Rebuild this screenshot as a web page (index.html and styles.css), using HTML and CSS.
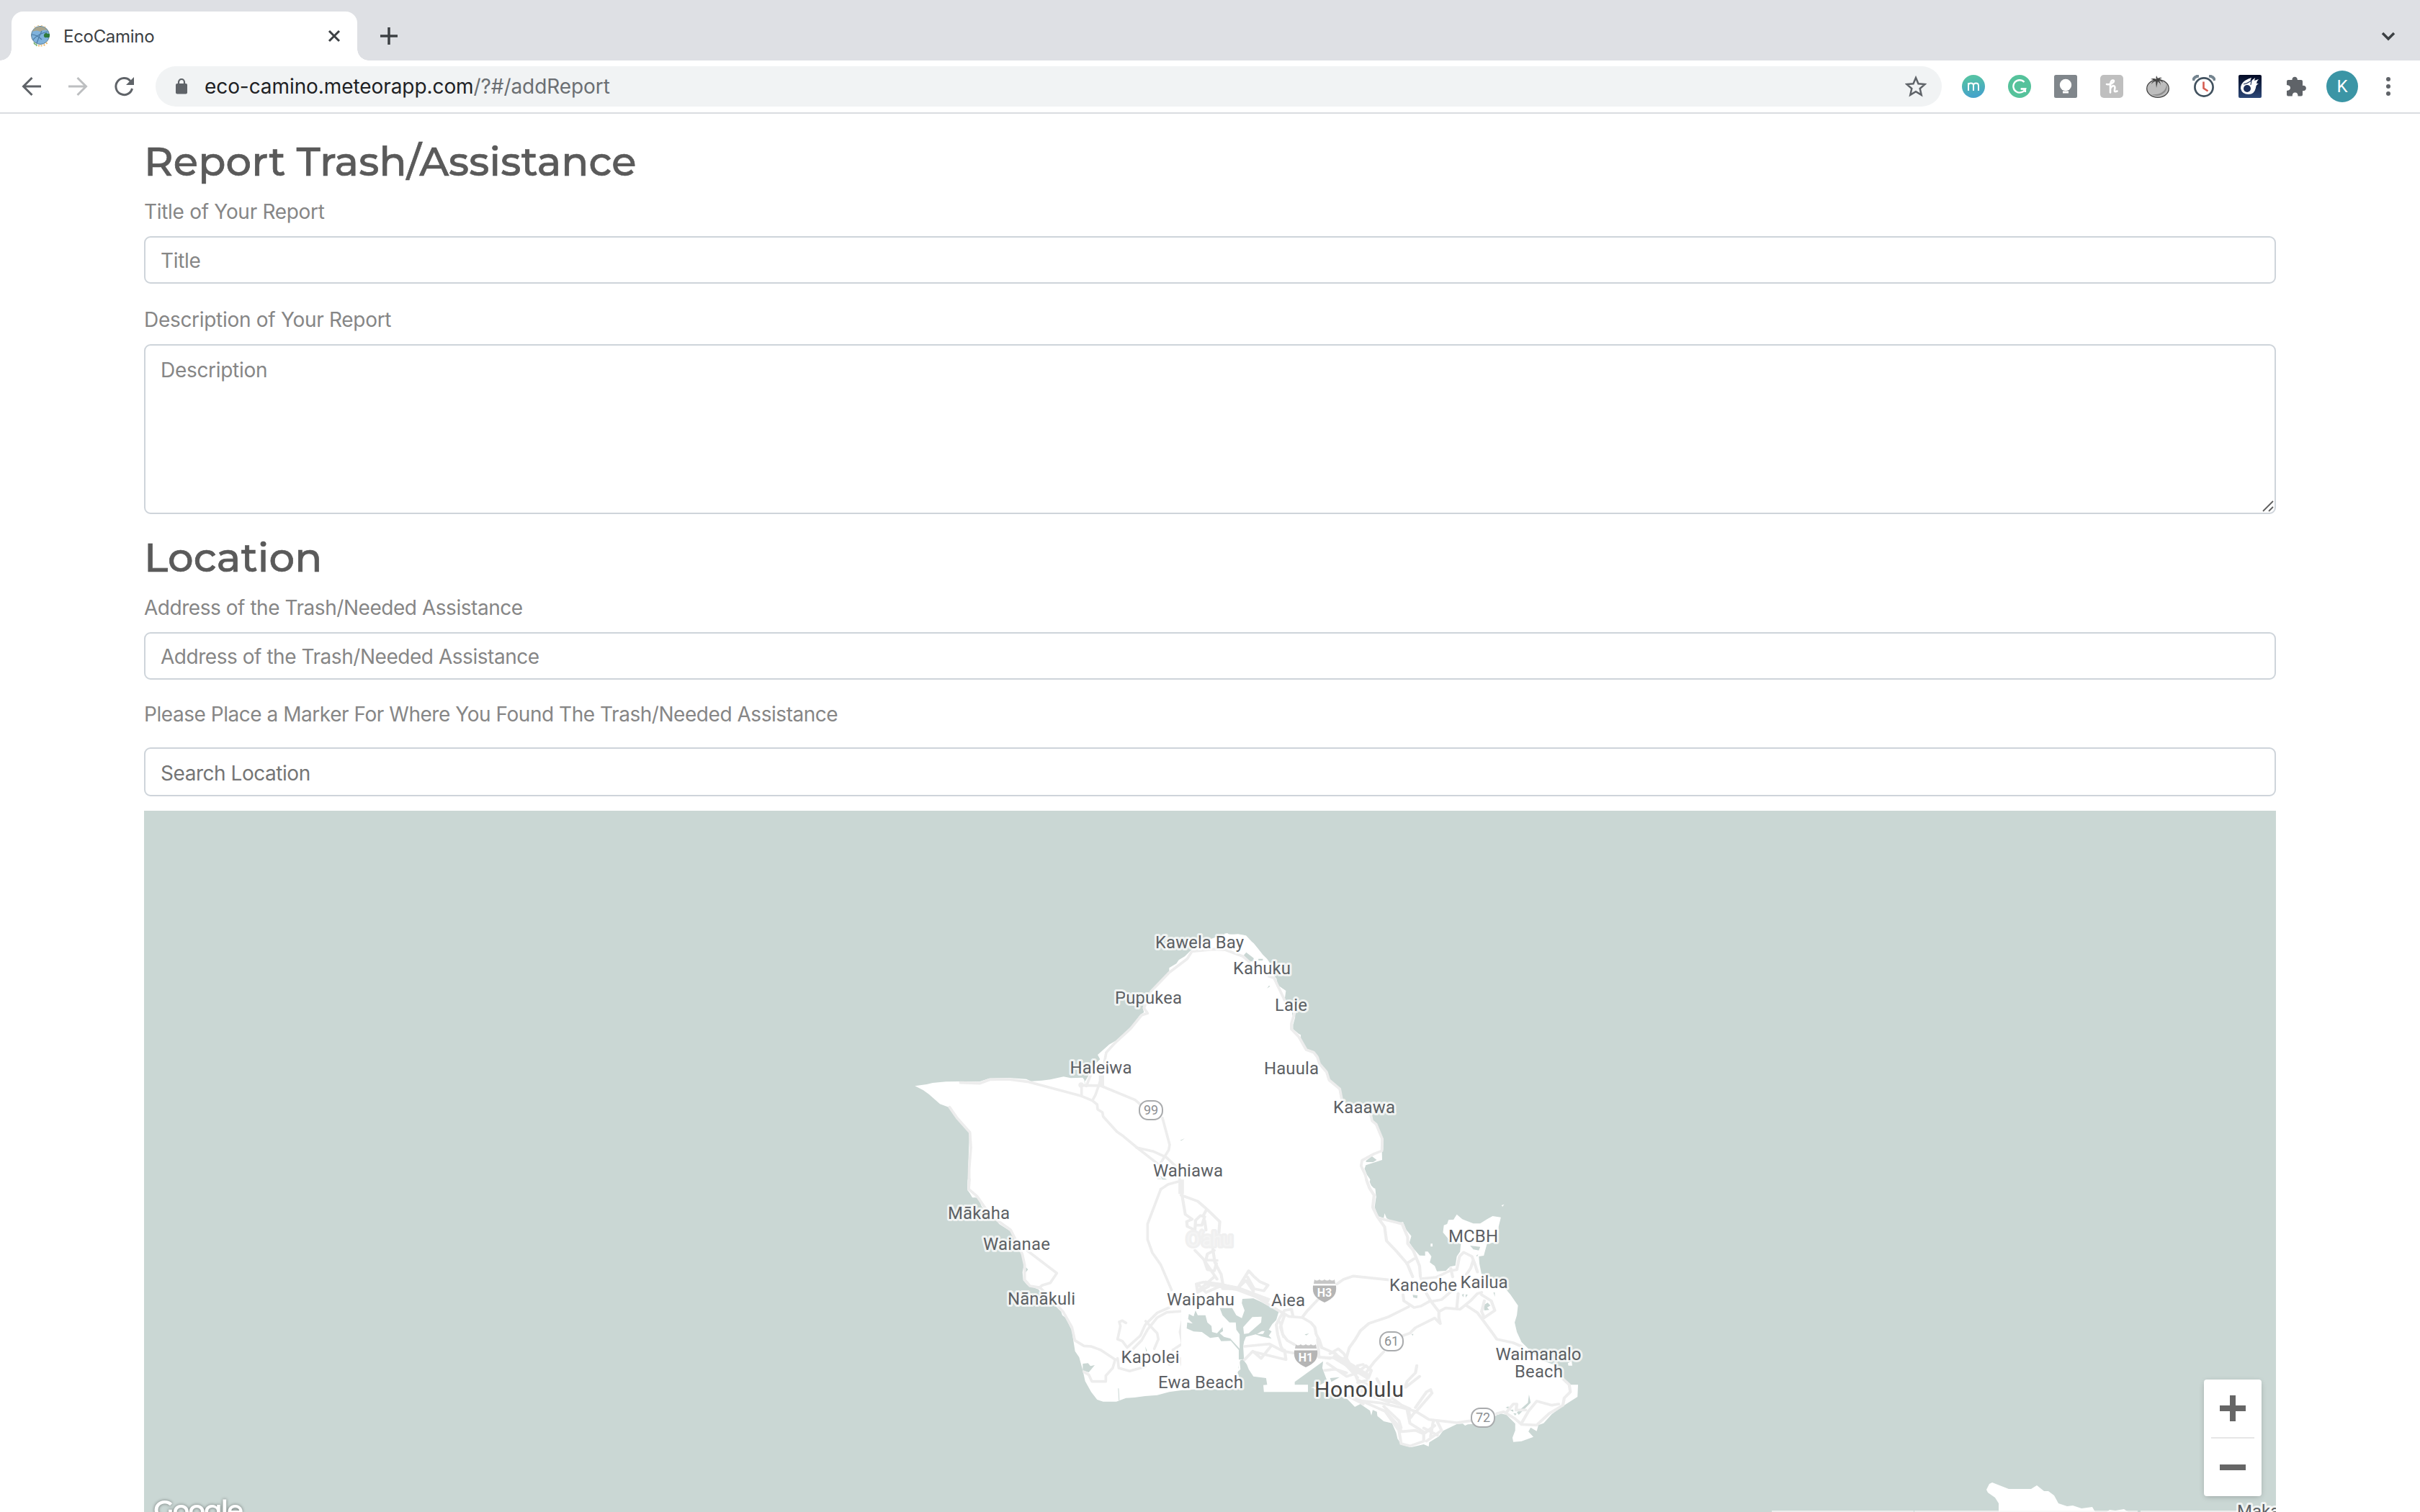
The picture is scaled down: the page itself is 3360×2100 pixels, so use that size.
FILE: index.html
```
<!DOCTYPE html>
<html lang="en">
<head>
<meta charset="utf-8">
<title>EcoCamino</title>
<link rel="stylesheet" href="styles.css">
</head>
<body>
<header class="browser">
  <div class="tabstrip">
    <div class="tab">
      <svg class="favicon" viewBox="0 0 30 30"><circle cx="15" cy="14" r="12.5" fill="#7fb2dc" stroke="#5d7f93" stroke-width="1"/><path d="M4 9Q8 1 16 2Q22 3 25 8Q20 5 15 9Q10 6 4 9Z" fill="#a9a58d"/><path d="M5 20Q12 12 25 9M10 25Q13 16 17 8M3 13Q10 13 17 20" fill="none" stroke="#4a7ba5" stroke-width="1.2"/><path d="M20 13q3-4 5-1q4-1 3 3q0 3-4 2q-5 1-4-4Z" fill="#2f7a3c"/><path d="M6 24l2 3M9 26l1 3" stroke="#7fb777" stroke-width="2"/><path d="M13 27.500l0 2M16.500 27.500l0 2M20 26.500l1 2M23 24l1.500 2" stroke="#e9b96e" stroke-width="2"/><path d="M7 2l1 1M12 0l0 1M17 0l0 1M22 2l-1 1" stroke="#e9b96e" stroke-width="1.500"/></svg>
      <span class="tab-title">EcoCamino</span>
      <svg class="tab-close" viewBox="0 0 20 20"><path d="M3 3l14 14M17 3L3 17" stroke="#3c4043" stroke-width="3"/></svg>
    </div>
    <svg class="new-tab" viewBox="0 0 24 24"><path d="M12 0v24M0 12h24" stroke="#3c4043" stroke-width="3.500"/></svg>
    <svg class="tab-search" viewBox="0 0 24 24"><path d="M4 8l8 8 8-8" fill="none" stroke="#3c4043" stroke-width="3.500"/></svg>
  </div>
  <div class="toolbar">
    <div class="nav">
      <svg viewBox="0 0 36 36"><path d="M31 18H7M18.500 6L6.500 18l12 12" fill="none" stroke="#5f6368" stroke-width="3"/></svg>
      <svg viewBox="0 0 36 36"><path d="M5 18h24M17.500 6l12 12-12 12" fill="none" stroke="#bdbfc1" stroke-width="3"/></svg>
      <svg viewBox="0 0 36 36"><path d="M29.500 21A11.500 11.500 0 1 1 27 10.500" fill="none" stroke="#5f6368" stroke-width="3"/><path d="M32 5v11H21Z" fill="#5f6368"/></svg>
    </div>
    <div class="omnibox">
      <svg class="lock" viewBox="0 0 16 22"><rect y="7" width="16" height="14.500" rx="2" fill="#5f6368"/><path d="M4 8V5a4 4 0 0 1 8 0v3" fill="none" stroke="#5f6368" stroke-width="2.200"/></svg>
      <span class="url">eco-camino.meteorapp.com<span class="path">/?#/addReport</span></span>
      <svg class="star" viewBox="0 0 30 30"><path d="M15 3l3.500 8.300 9 .8-6.800 5.900 2 8.800L15 22.100l-7.700 4.700 2-8.800-6.800-5.900 9-.8Z" fill="none" stroke="#5f6368" stroke-width="2.500"/></svg>
    </div>
    <div class="extensions">
      <svg viewBox="0 0 32 32"><defs><linearGradient id="mg" x1=".4" y1="0" x2=".6" y2="1"><stop offset=".1" stop-color="#55c2a5"/><stop offset=".9" stop-color="#45a3c9"/></linearGradient></defs><circle cx="16" cy="16" r="16" fill="url(#mg)"/><path d="M9 22V11M9 15q0-3.500 3.500-3.500T16 15v7M16 15q0-3.500 3.500-3.500T23 15v7" fill="none" stroke="#fff" stroke-width="1.900"/></svg>
      <svg viewBox="0 0 32 32"><circle cx="16" cy="16" r="16" fill="#55c29b"/><path d="M22.500 10A8.700 8.700 0 1 0 24 19.500H18" fill="none" stroke="#fff" stroke-width="2.400"/><path d="M17.500 19.500H24V24" fill="none" stroke="#fff" stroke-width="2.200"/></svg>
      <svg viewBox="0 0 32 32"><rect width="32" height="32" rx="2.500" fill="#80868b"/><circle cx="16" cy="14" r="8.200" fill="#fff"/><path d="M11 18h10v3H11ZM12 22.500h8v3h-8Z" fill="#fff"/></svg>
      <svg viewBox="0 0 32 32"><rect width="32" height="32" rx="5" fill="#bfbfbf"/><path d="M9 13q6 1 9.500-3 1.500-3-1.500-2.500-3 1-3 8v9M14 19q3-5 5.500-3.500 1.500 1 .5 5-1 4 3.500 2" fill="none" stroke="#fff" stroke-width="2.600" stroke-linecap="round" stroke-linejoin="round"/></svg>
      <svg viewBox="0 0 32 32"><ellipse cx="16" cy="19" rx="15.300" ry="12.300" fill="#bdbdbd" stroke="#444" stroke-width="1.300"/><path d="M28 12q3 10-6 15-7 4-15 0 9 1 15-3 6-4 6-12Z" fill="#8e8e8e"/><path d="M14 1q-1 3 0 5-4-2-8 0 3 0 5 2-3 1-4 5 3-4 6-4l1 9 2-9q3 2 4 6 0-4-2-7 3 0 5 3-1-5-5-5l4-2q-4-1-6 1-1-2-2-4Z" fill="#444"/></svg>
      <svg viewBox="0 0 32 32"><path d="M1 8q1-6 8-6.500" fill="none" stroke="#74848f" stroke-width="4"/><path d="M31 8q-1-6-8-6.500" fill="none" stroke="#74848f" stroke-width="4"/><circle cx="16" cy="17" r="12.600" fill="#fff" stroke="#42525f" stroke-width="2.700"/><path d="M15.500 9.500v9l6 4" fill="none" stroke="#d65c50" stroke-width="2.600"/></svg>
      <svg viewBox="0 0 32 32"><defs><linearGradient id="cg" x1="0" y1="0" x2="0" y2="1"><stop offset="0" stop-color="#040b25"/><stop offset="1" stop-color="#2d4878"/></linearGradient></defs><rect width="32" height="32" rx="2" fill="url(#cg)"/><path d="M3 19Q3 12 9 8q5-3 9-4-2 3-1 5l6-5-1 4 6-2q-3 3-3 6l3 0q-4 2-4 6-2 9-10 9-9 0-11-8Z" fill="#fff"/><circle cx="12" cy="19" r="5" fill="#1b2d58"/><path d="M7 13q5-1 11-5l-1 6" fill="none" stroke="#1b2d58" stroke-width="1.100"/></svg>
      <svg viewBox="0 0 32 32"><path d="M3 7h7.500a3.700 3.700 0 1 1 7.300 0H23q2 0 2 2v6a3.700 3.700 0 1 1 0 7v5.500q0 2-2 2h-4.500q0-5-3.900-5t-3.900 5H5q-2 0-2-2V22q5-.500 5-4t-5-4V9q0-2 2-2Z" fill="#5f6368"/></svg>
    </div>
    <div class="avatar">K</div>
    <svg class="menu" viewBox="0 0 32 32"><g fill="#5f6368"><circle cx="16" cy="6" r="3"/><circle cx="16" cy="16" r="3"/><circle cx="16" cy="26" r="3"/></g></svg>
  </div>
</header>

<main class="page">
  <h1>Report Trash/Assistance</h1>
  <label class="short" for="title">Title of Your Report</label>
  <input class="short" id="title" type="text" placeholder="Title">
  <label class="short second" for="desc">Description of Your Report</label>
  <div class="area">
    <textarea class="short" id="desc" placeholder="Description"></textarea>
    <svg class="grip" viewBox="0 0 16 16"><path d="M1 15L15 1M9 15l6-6" stroke="#606060" stroke-width="1.800"/></svg>
  </div>
  <h1 class="location">Location</h1>
  <label for="addr">Address of the Trash/Needed Assistance</label>
  <input id="addr" type="text" placeholder="Address of the Trash/Needed Assistance">
  <label class="marker" for="search">Please Place a Marker For Where You Found The Trash/Needed Assistance</label>
  <input class="search" id="search" type="text" placeholder="Search Location">

  <div class="map">
    <svg class="canvas" viewBox="200 1126 2960 974">
      <!-- north-west quarter -->
      <g transform="translate(1240 1260) scale(.33333)">
        <path class="land" d="M91 745L140 738 165 732 220 727 275 726 360 727 400 713 480 711 555 716 575 725 620 722 655 718 710 706 740 712 790 710 800 725 812 705 830 665 862 634 852 615 900 572 930 555 990 500 1030 448 1045 438 1040 420 1045 400 1072 348 1150 270 1150 253 1180 235 1190 220 1215 205 1240 180 1262 162 1330 130 1385 112 1440 115 1470 118 1500 150V1210H330L310 1175 312 1100 318 940 265 882 235 835 195 820 150 780 125 762Z"/>
        <path class="water" d="M1195 972l20-9-14 10ZM1112 1120l28 14 5 14-18-4ZM1200 1140l20 10-16-2ZM795 712l8 36-6-20Z"/>
        <g class="road">
          <path d="M280 731L360 734 405 718 480 717 560 727 785 787 830 806 850 822 852 842 872 855 875 872 932 935 960 955 1020 1005 1110 1075"/>
          <path d="M785 787V742L865 744 1008 803 1035 826M1122 878L1152 990 1148 1012 1112 1070M1015 1002L1085 1018 1138 1042 1180 1082 1195 1140"/>
          <path d="M830 806L843 782 868 710 888 605 920 570 990 505 1035 450 1060 442 1045 420 1075 350 1150 272 1225 215 1245 184 1335 175 1390 178 1450 210 1490 225M805 745L822 702"/>
          <path d="M235 833L268 880 320 938 324 1000 317 1090V1170L345 1205M1105 1205L1115 1180 1145 1158 1190 1145 1210 1205M1105 1130L1145 1158"/>
        </g>
        <circle cx="783" cy="741" r="11" fill="#ededed"/>
        <path d="M868 700V745M1200 1140V1200" stroke="#ededed" stroke-width="22" fill="none"/>
      </g>
      <!-- north-east quarter -->
      <g transform="translate(1700 1260) scale(.34439 .33333)">
        <path class="land" d="M0 110L12 108 20 115 55 112 82 117 95 135 118 150 135 172 155 198 172 215 185 235 205 262 200 285 210 298 215 325 248 348 243 385 265 410 285 440 285 460 277 490 277 508 300 528 308 532 308 545 318 565 332 590 360 600 376 618 385 650 412 685 424 720 468 757 476 800 490 820 560 840 590 865 600 890 612 905 622 930 641 965 640 1010 635 1020 636 1053 570 1075 565 1090 575 1115 588 1135 582 1155 600 1170 608 1172 612 1210H0Z"/>
        <path class="water" d="M78 200l10-12 30 24 0 14-20 0ZM137 215h18v7h-18ZM172 338l8-12 4 4ZM571 1056L595 1038 614 1053 600 1062H571ZM272 435l6 0-3 20Z"/>
        <g class="road"><path d="M0 176L75 205 100 228M180 288L200 295 243 388M283 440L270 485V508L300 540 330 594 360 605 375 625 383 652 412 687 422 720 465 757 473 800M590 865L595 890 612 905 636 965 635 1015 603 1028 555 1055 551 1078 568 1115 578 1160 600 1185 604 1210"/></g>
      </g>
      <!-- south-west quarter -->
      <g transform="translate(1240 1640) scale(.33333)">
        <path class="land" d="M311 -5L310 40 332 63 355 72 368 105 400 150 430 165 442 180 492 212 502 235 535 300 545 350 539 380 542 415 560 435 605 452 625 475 670 515 700 545 705 560 718 570 745 625 750 660 758 710 775 735 790 790 800 835 825 880 850 912 875 920 930 920 970 905 1005 903 1050 897 1100 893 1150 880 1205 872 1300 866 1400 870 1430 830 1425 805 1447 785 1440 720V-5Z"/>
        <path class="water" d="M790 762L812 760 822 772 840 768 815 798 790 790ZM553 360l9 10-10 12ZM1050 690l8 18-4 4ZM1425 780l12-14 2 14-10 8ZM937 865h3l3 50h-3Z"/>
        <g class="road">
          <path d="M318 -5L315 35 350 65 385 115 430 162 490 205 510 245 538 305 548 350V412L570 438 612 445 680 515 708 545 745 610 757 665 795 688 825 690 865 705 925 745"/>
          <path d="M560 292L682 385 655 425 620 436 608 446M925 745L915 780 886 812V836H828L815 808 795 796M935 740L940 780 985 793 1050 775"/>
          <path d="M970 592L955 583 942 588 947 605 935 660 955 668 975 695 1030 645 1050 600 1100 550 1150 528M1000 700L1035 665 1060 620 1100 570 1140 548 1210 543 1240 530M1052 585L1100 635 1105 660 1088 700M1115 35L1060 180V245L1080 300 1115 350 1160 455"/>
          <path d="M1205 528V580L1195 630 1225 780M1215 745L1288 670 1310 705 1358 742 1300 805M1165 705L1200 682M1150 765L1180 750M1195 740L1215 805 1255 795 1235 750M1115 35L1145 15 1200 0"/>
        </g>
      </g>
      <!-- south-east quarter -->
      <g transform="translate(1640 1640) scale(.38265 .33333)">
        <path class="land" d="M0 -5H680L690 20 703 35 707 70 702 110 715 148 735 155 738 135 745 155 775 177 805 172 817 205 835 230 828 258 845 285 865 311 885 312V295H895L908 315 902 340 920 355 928 377 960 375 975 358 995 353 1000 315 1012 295 1015 262 975 250 950 215 953 185 965 180 970 163 988 162 1000 140 1020 160 1060 178H1085L1110 160 1130 147 1160 152 1152 190 1148 255 1110 262 1103 290 1098 312 1080 315 1082 345 1090 390 1130 405 1170 440 1195 475 1222 520 1218 560 1210 590 1218 630 1235 672 1300 745 1350 765 1385 820 1408 850H1440L1438 900 1390 935 1345 972 1315 1010 1296 1018 1290 1043 1268 1028 1260 1045 1278 1067 1235 1085 1205 1088 1202 1070 1212 1040V1012L1180 975 1160 970 1140 980 1100 1010 1040 1015 1030 1020 1022 1012 1000 1014 950 1042 935 1065 900 1090 898 1107 880 1098 835 1110 800 1100 785 1075 780 1050 765 1010 735 1002 712 980 710 962 695 955 690 978 685 958 650 930 630 942 603 910 570 895 500 875 480 865 530 835 512 780 515 752 412 838V850H460V880H300L298 851 312 850 308 822 262 815 245 785 238 765 225 745 215 748 208 768 205 800 222 860 200 868H0Z"/>
        <path class="water" d="M222 492L262 490 290 505 330 530 354 545 345 580 330 598 318 620 328 628 318 645 328 658 290 648 270 640 235 650 228 670 225 690 228 745 209 745 209 705 180 667 145 668 135 650 105 655 75 630 45 628 20 615 22 590 42 595 25 575 28 555 45 565 52 540 60 560 88 560 95 590 110 605 112 630 130 635 150 610 152 626 140 635 155 650 178 657 212 700V640L200 620 198 590 175 590 150 560 140 530 185 530 200 560 220 572 230 540 220 510Z"/>
        <path class="land" d="M225 610L258 568 292 566 290 590 245 635 228 638ZM905 262h7v12h-7ZM1162 102l10-4-6 10ZM1403 760l14-8 2 18h-14ZM470 862l14-4 0 6ZM275 638l18-12 10 0-6 12Z"/>
        <path class="water" d="M840 475L858 478 856 490 842 486ZM1097 518L1112 508 1122 520 1110 528 1118 538 1100 540ZM1048 270L1085 275 1080 290 1060 286ZM1018 475l8-4-2 14ZM1032 473l8 2-8 12ZM1258 925L1262 890 1268 925 1225 975 1218 965ZM1177 945l10-5 4 10ZM1193 955l12-2 0 10ZM1205 968l12 2-5 8ZM1143 975l15 2-10 5ZM448 640l16-4-10 8ZM540 822L575 818 545 838ZM835 638l8 0-3 8ZM1070 312l8-6-4 10ZM1133 465l5 0 0 18Z"/>
        <g class="road">
          <path d="M672 -5L683 30 700 60 695 110 712 150 738 192 745 250 780 292 820 345 840 400M725 158L770 170 802 180 822 235 822 262 842 290 865 355 868 400M818 345L845 325"/>
          <path d="M870 408L925 402 975 375 1000 370 1010 315 1025 298 1055 315 1065 345 1075 380M1060 330L1050 365 1035 390M978 365L985 400"/>
          <path d="M755 413L625 397 590 410 565 430M500 490L455 545 440 568M825 525L750 568 680 595 650 625 632 660 610 695 600 735"/>
          <path d="M805 475L808 500 845 528 870 522 905 500 935 545 960 530 1012 535 1050 500 1075 470 1090 465M910 502L945 495 980 460M890 470L905 500M1005 470L1000 530M935 545V570L940 595 920 572 850 612 830 635 805 645"/>
          <path d="M1035 520L1075 550 1130 635 1145 660 1205 675 1235 690M1090 475L1125 500 1138 540 1100 570 1090 545 1100 500M735 712L700 755 670 800"/>
          <path d="M0 60L60 85 95 120 140 170 137 215M0 40L15 140 40 160 20 170 22 190 50 205 52 165 70 145 85 150 75 185 55 185M85 165L90 205M92 120L80 145M50 290L80 325 130 410M115 285L122 340 145 390 152 435M120 290L95 305 90 330 130 332M85 335L95 370 120 375 128 345"/>
          <path d="M60 465L55 430 80 422 140 430 205 448 245 375 265 400 285 420 315 435 300 458 265 450 240 400M60 430L90 465 150 435M60 465L100 440M205 448L235 415 262 460M150 450L195 450 250 468 330 525 390 565 440 570 470 590 485 610 490 640 502 665 510 695"/>
          <path d="M120 400L60 460M345 600L358 570 375 540 400 535 405 560M345 600L350 640 362 690 370 705M360 590L368 640 385 665 410 682M375 560L360 610 372 650M230 690L320 680 370 710 410 718M230 745L260 710 290 740 325 690M260 712L380 745 375 705M495 660L500 735 540 740"/>
          <path d="M510 695L550 715 620 770 640 830 680 850M500 735L600 740 625 800M540 720L570 700 590 720 610 760 680 810M530 760L600 815 640 800 670 770 690 790 680 820M520 790L560 785 600 800M560 720L640 820M640 800L640 770 660 765M680 830L640 840 700 900 790 930"/>
          <path d="M630 905L700 940 740 960 780 1010 800 1045 850 1040 880 1055 880 1085 830 1105 798 1095 790 1040 740 960M640 915L720 925 800 945 850 960 900 995 1000 1008 1050 1000M710 825L735 880 800 935 830 950"/>
          <path d="M735 940L790 1000 798 1030M820 955L830 1010 885 1050M850 960L830 990 825 950M850 965L910 885 905 870 890 880 850 945M855 770L850 800 820 835 812 860M865 815L815 860M915 1000L905 1065M930 1005L945 1040 890 1085M885 1050L920 1020M880 1030L930 1060"/>
          <path d="M1145 970L1170 962 1210 990 1235 1015 1290 1018 1335 970 1385 935 1390 905 1412 880 1408 850 1380 820M1235 1010L1260 960 1290 918 1345 935 1370 930M1180 965L1205 930 1218 930 1215 955 1250 955M560 870L660 930"/>
        </g>
        <path d="M85 425L205 450 320 500 M0 -5V55M620 860L760 920M550 730L680 820" fill="none" stroke="#ededed" stroke-width="20"/>
      </g>
      <!-- neighbouring island -->
      <path class="land" d="M2758 2069L2762 2061 2766 2059 2789 2068H2820L2828 2063 2838 2071 2844 2071 2852 2077 2858 2088 2870 2092 2878 2091 2890 2095 2905 2093 2909 2100H2775V2088L2770 2080 2760 2073ZM2925 2100l4-3 8 1 12-2 6 4Z"/>
      <path d="M2460 2099H2657M2658 2099H2968M2972 2099H3160" stroke="#f5f5f5" stroke-opacity=".75" stroke-width="2"/>

      <g class="island"><text x="1647" y="1731" textLength="65">O‘ahu</text></g>
      <g class="town">
        <text x="1604" y="1316.500" textLength="123">Kawela Bay</text>
        <text x="1548" y="1393.500" textLength="93">Pupukea</text>
        <text x="1485.500" y="1490.500" textLength="86">Haleiwa</text>
        <text x="1601" y="1633.500" textLength="97">Wahiawa</text>
        <text x="1712" y="1352.500" textLength="80">Kahuku</text>
        <text x="1770" y="1403.500" textLength="45">Laie</text>
        <text x="1755" y="1491.500" textLength="76">Hauula</text>
        <text x="1851" y="1545.500" textLength="86">Kaaawa</text>
        <text x="1316" y="1692.500" textLength="86">Mākaha</text>
        <text x="1365" y="1735.500" textLength="93">Waianae</text>
        <text x="1399" y="1811.500" textLength="94">Nānākuli</text>
        <text x="1620" y="1812.500" textLength="94">Waipahu</text>
        <text x="1556.500" y="1892.500" textLength="81">Kapolei</text>
        <text x="1608" y="1927.500" textLength="118">Ewa Beach</text>
        <text x="1765" y="1813.500" textLength="47">Aiea</text>
        <text x="1929" y="1792.500" textLength="94">Kaneohe</text>
        <text x="2027.500" y="1788.500" textLength="66">Kailua</text>
        <text x="2011" y="1724.500" textLength="69">MCBH</text>
        <text x="2076.500" y="1888.500" textLength="119">Waimanalo</text>
        <text x="2103" y="1912.500" textLength="67">Beach</text>
        <text x="3106" y="2107">Maka</text>
        <text class="city" x="1825" y="1939.500" textLength="124">Honolulu</text>
      </g>
      <g class="route">
        <rect x="1582" y="1529" width="32" height="26" rx="12"/><text x="1598" y="1548">99</text>
        <rect x="1916" y="1850" width="32" height="26" rx="12"/><text x="1932" y="1869">61</text>
        <rect x="2043" y="1956" width="32" height="26" rx="12"/><text x="2059" y="1975">72</text>
      </g>
      <g class="interstate">
        <g transform="translate(1823 1777)"><path class="crown" d="M2 0Q5 3 9 0Q12 3 16 0Q20 3 23 0Q27 3 30 0L31 6H1Z"/><path class="body" d="M0 8.500H32Q33 18 29 23 25 28 16 32 7 28 3 23-1 18 0 8.500Z"/><text x="16" y="24">H3</text></g>
        <g transform="translate(1797 1867)"><path class="crown" d="M2 0Q5 3 9 0Q12 3 16 0Q20 3 23 0Q27 3 30 0L31 6H1Z"/><path class="body" d="M0 8.500H32Q33 18 29 23 25 28 16 32 7 28 3 23-1 18 0 8.500Z"/><text x="16" y="24">H1</text></g>
      </g>
      <text class="brand" x="213" y="2110" textLength="125">Google</text>
    </svg>
    <div class="zoom">
      <button aria-label="Zoom in"><svg viewBox="0 0 36 36"><path d="M18 0v36M0 18h36" stroke="#666" stroke-width="8"/></svg></button>
      <button aria-label="Zoom out"><svg viewBox="0 0 36 36"><path d="M0 18h36" stroke="#666" stroke-width="8"/></svg></button>
    </div>
  </div>
</main>
</body>
</html>
```
FILE: styles.css
```
* { box-sizing: border-box; }
html, body { height: 100%; }
body {
  margin: 0;
  overflow: hidden;
  background: #fff;
  font-family: Inter, "Liberation Sans", sans-serif;
  display: flex;
  flex-direction: column;
}
svg { display: block; flex: none; }

/* browser chrome */
.browser { flex: none; }
.tabstrip {
  height: 84px;
  padding: 16px 32px 0 16px;
  background: #dee0e4;
  display: flex;
  align-items: center;
}
.tab {
  position: relative;
  width: 480px;
  height: 68px;
  padding: 0 22px 0 25px;
  background: #fff;
  border-radius: 16px 16px 0 0;
  display: flex;
  align-items: center;
}
.tab::before, .tab::after {
  content: "";
  position: absolute;
  bottom: 0;
  width: 16px;
  height: 16px;
}
.tab::before { left: -16px; background: radial-gradient(circle at 0 0, transparent 15.5px, #fff 16px); }
.tab::after { right: -16px; background: radial-gradient(circle at 100% 0, transparent 15.5px, #fff 16px); }
.favicon { width: 30px; height: 30px; }
.tab-title { margin-left: 17px; font-size: 24px; letter-spacing: -0.3px; color: #3c4043; flex: 1; }
.tab-close { width: 20px; height: 20px; }
.new-tab { width: 24px; height: 24px; margin-left: 32px; }
.tab-search { width: 24px; height: 24px; margin-left: auto; }
.toolbar {
  height: 74px;
  padding: 8px 28px 8px 26px;
  border-bottom: 2px solid #dadce0;
  display: flex;
  align-items: center;
}
.nav { display: flex; gap: 28px; }
.nav svg { width: 36px; height: 36px; }
.omnibox {
  flex: 1;
  height: 56px;
  margin-left: 26px;
  padding: 0 21px 0 28px;
  border-radius: 28px;
  background: #f1f3f4;
  display: flex;
  align-items: center;
}
.lock { width: 16px; height: 22px; }
.url { flex: 1; margin-left: 24px; font-size: 28px; letter-spacing: -0.08px; color: #202124; }
.path { color: #6b6f73; }
.star { width: 30px; height: 30px; }
.extensions { margin-left: 28px; display: flex; gap: 32px; }
.extensions svg { width: 32px; height: 32px; }
.avatar {
  width: 44px;
  height: 44px;
  margin: 0 26px;
  border-radius: 50%;
  background: #3b95a5;
  color: #fff;
  font: 24px/44px Roboto, sans-serif;
  text-align: center;
}
.menu { width: 32px; height: 32px; }

/* report form */
.page {
  flex: 1;
  min-height: 0;
  padding: 33px 200px 0;
  display: flex;
  flex-direction: column;
}
h1 {
  flex: none;
  margin: 0 0 15px;
  height: 67px;
  font: 500 56px/67px Montserrat, Inter, sans-serif;
  letter-spacing: 0.13px;
  -webkit-text-stroke: 0.7px #5a5a5a;
  color: #5a5a5a;
}
.location { margin-top: 27px; }
label {
  flex: none;
  margin-bottom: 13px;
  font-size: 28px;
  line-height: 42px;
  letter-spacing: -0.46px;
  color: #868686;
}
label.second { margin-top: 29px; }
label.marker { margin: 27px 0 25px; }
input, textarea {
  flex: none;
  width: 100%;
  height: 66px;
  margin: 0;
  padding: 2px 21px 0;
  border: 2px solid #ced4da;
  border-radius: 9px;
  background: #fff;
  font: 28px/42px Inter, "Liberation Sans", sans-serif;
  letter-spacing: -0.46px;
  outline: 0;
}
.short { letter-spacing: -0.3px; }
::placeholder { color: #868686; opacity: 1; }
.search { height: 68px; padding-top: 4px; }
.search::placeholder { color: #757575; }
.area { position: relative; flex: none; height: 236px; }
textarea { display: block; height: 236px; padding-top: 13px; resize: none; }
.grip { position: absolute; right: 3px; bottom: 3px; width: 16px; height: 16px; }

/* map */
.map {
  position: relative;
  flex: 1;
  min-height: 0;
  margin-top: 20px;
  background: #cad7d4;
  overflow: hidden;
}
.canvas { width: 2960px; height: 974px; font-family: Roboto, sans-serif; }
.land { fill: #fff; }
.water { fill: #cad7d4; }
.road { fill: none; stroke: #ededed; stroke-width: 11; stroke-linejoin: round; stroke-linecap: round; }
.town { font-size: 24px; fill: #5c6064; stroke: #fff; stroke-opacity: .72; stroke-width: 6; stroke-linejoin: round; paint-order: stroke; }
.town .city { font-size: 30px; fill: #444; }
.island { font-size: 28px; fill: #f4f4f4; stroke: #f0f0f0; stroke-width: 6; stroke-linejoin: round; paint-order: stroke; }
.route { text-anchor: middle; font-size: 18px; fill: #8b8e91; }
.route rect { fill: #fff; stroke: #a9abad; stroke-width: 2; }
.interstate { text-anchor: middle; font-size: 16px; font-weight: 700; fill: #fff; }
.interstate .crown { fill: #c6c6c6; }
.interstate .body { fill: #b5b5b5; }
.brand { font: 600 37px Montserrat, Inter, sans-serif; fill: #fff; filter: drop-shadow(0 0 2px rgba(0, 0, 0, .45)); }
.zoom {
  position: absolute;
  top: 790px;
  right: 20px;
  width: 80px;
  height: 162px;
  padding: 0 10px;
  border-radius: 4px;
  background: #fff;
  box-shadow: 0 2px 8px -2px rgba(0, 0, 0, .3);
  display: flex;
  flex-direction: column;
}
.zoom button {
  flex: 1;
  padding: 0;
  border: 0;
  background: none;
  display: flex;
  align-items: center;
  justify-content: center;
}
.zoom button + button { border-top: 2px solid #e6e6e6; }
.zoom svg { width: 36px; height: 36px; }
```
